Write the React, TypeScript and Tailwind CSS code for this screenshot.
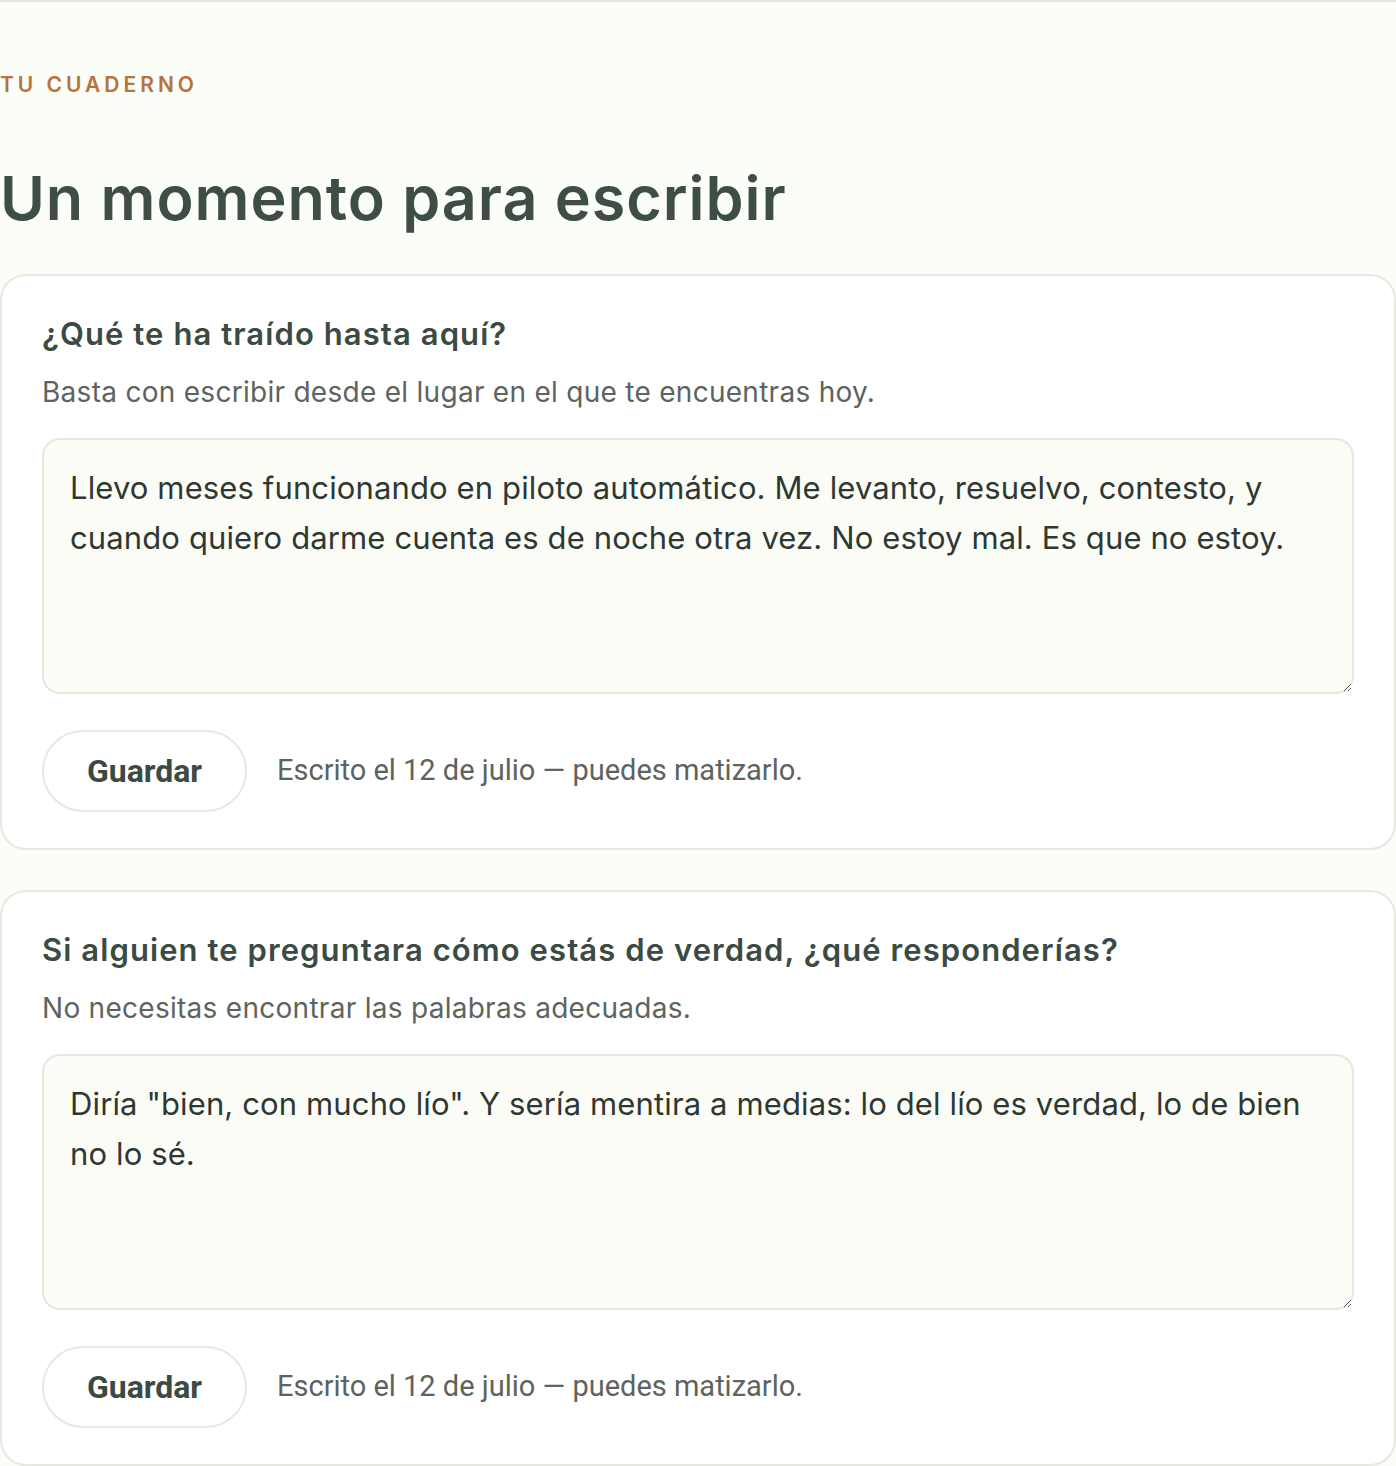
import { useState } from "react";

const prompts = [
  {
    question: "¿Qué te ha traído hasta aquí?",
    hint: "Basta con escribir desde el lugar en el que te encuentras hoy.",
    answer:
      "Llevo meses funcionando en piloto automático. Me levanto, resuelvo, contesto, y cuando quiero darme cuenta es de noche otra vez. No estoy mal. Es que no estoy.",
  },
  {
    question: "Si alguien te preguntara cómo estás de verdad, ¿qué responderías?",
    hint: "No necesitas encontrar las palabras adecuadas.",
    answer:
      'Diría "bien, con mucho lío". Y sería mentira a medias: lo del lío es verdad, lo de bien no lo sé.',
  },
];

function PromptCard({ question, hint, answer }: { question: string; hint: string; answer: string }) {
  const [value, setValue] = useState(answer);
  return (
    <section className="rounded-[26px] border-2 border-[#e7e9e1] bg-white px-10 pt-10 pb-9">
      <h2 className="text-[31px] leading-[36px] font-semibold tracking-[0.035em] text-[#3b4a42]">
        {question}
      </h2>
      <p className="mt-[22px] text-[28px] leading-[36px] tracking-[0.01em] text-[#5d6460]">{hint}</p>
      <textarea
        value={value}
        onChange={(e) => setValue(e.target.value)}
        className="mt-[28px] block h-[256px] w-full rounded-[18px] border-2 border-[#e6e8e0] bg-[#fbfcf6] px-[26px] pt-[23px] text-[31px] leading-[50px] tracking-[0.004em] text-[#2e3833] outline-none"
      />
      <div className="mt-9 flex items-center gap-[30px]">
        <button className="h-[82px] w-[205px] rounded-full border-2 border-[#e7e8e2] bg-white font-['Roboto',sans-serif] text-[32px] font-bold text-[#3b4a42]">
          Guardar
        </button>
        <span className="font-['Roboto',sans-serif] text-[29px] text-[#5d6460]">
          Escrito el 12 de julio — puedes matizarlo.
        </span>
      </div>
    </section>
  );
}

export default function App() {
  return (
    <div className="min-h-screen border-t-2 border-[#e3e5df] bg-[#fbfdf7] font-['Inter',sans-serif]">
      <div className="pt-[70px]">
        <p className="text-[21px] leading-[25px] font-semibold tracking-[0.19em] text-[#b8733a]">
          TU CUADERNO
        </p>
        <h1 className="mt-[68px] text-[61px] leading-[66px] font-semibold tracking-[0.016em] text-[#3e4d45]">
          Un momento para escribir
        </h1>
        <div className="mt-[43px] flex flex-col gap-[40px]">
          {prompts.map((p) => (
            <PromptCard key={p.question} {...p} />
          ))}
        </div>
      </div>
    </div>
  );
}
